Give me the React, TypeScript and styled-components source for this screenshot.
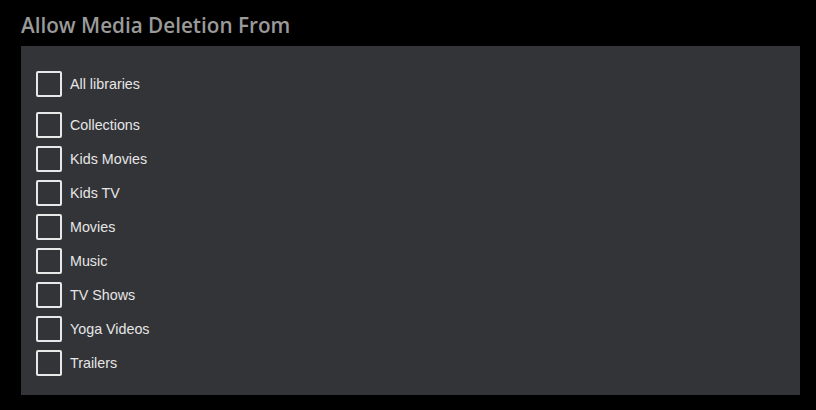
import { createGlobalStyle } from "styled-components";
import styled from "styled-components";

const GlobalStyle = createGlobalStyle`
  html, body {
    margin: 0;
    background: #000;
  }
`;

const Page = styled.div`
  width: 816px;
  height: 410px;
  box-sizing: border-box;
  padding: 10px 16px 0 21px;
  background: #000;
`;

const Heading = styled.h2`
  font-family: "Open Sans", "Noto Sans", sans-serif;
  font-size: 20.7px;
  font-weight: 600;
  line-height: 30px;
  color: #9a9a9a;
  margin: 0 0 6px;
`;

const Panel = styled.div`
  width: 779px;
  height: 349px;
  box-sizing: border-box;
  background: #333438;
  padding: 25px 15px 0;
  display: flex;
  flex-direction: column;
`;

const List = styled.div`
  display: flex;
  flex-direction: column;
  gap: 8px;
  margin-top: 15px;
`;

const Row = styled.label`
  display: flex;
  align-items: center;
  gap: 8px;
  height: 26px;
  cursor: pointer;
`;

const Box = styled.span`
  width: 26px;
  height: 26px;
  box-sizing: border-box;
  border: 2px solid #e8e8e8;
  border-radius: 2px;
  flex-shrink: 0;
`;

const Label = styled.span`
  font-family: "Liberation Sans", Arial, sans-serif;
  font-size: 14.3px;
  color: #e6e6e6;
`;

const libraries = [
  "Collections",
  "Kids Movies",
  "Kids TV",
  "Movies",
  "Music",
  "TV Shows",
  "Yoga Videos",
  "Trailers",
];

const Checkbox = ({ label }: { label: string }) => (
  <Row>
    <Box />
    <Label>{label}</Label>
  </Row>
);

export default function App() {
  return (
    <Page>
      <GlobalStyle />
      <Heading>Allow Media Deletion From</Heading>
      <Panel>
        <Checkbox label="All libraries" />
        <List>
          {libraries.map((name) => (
            <Checkbox key={name} label={name} />
          ))}
        </List>
      </Panel>
    </Page>
  );
}
